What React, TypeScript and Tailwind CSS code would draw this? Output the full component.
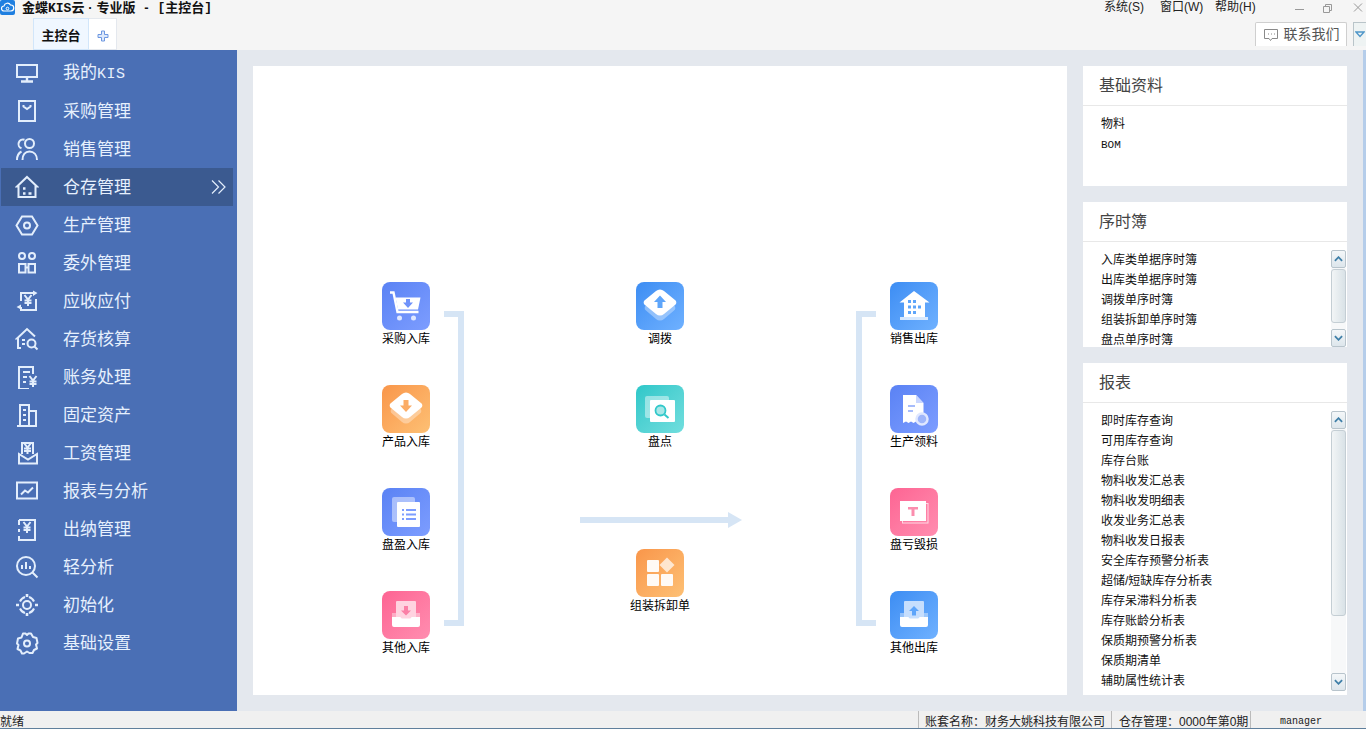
import React from 'react';

const cjk = "font-['Liberation_Sans','Noto_Sans_CJK_SC',sans-serif]";

const yen = (x: number, y: number) => (
  <path d={`M${x - 3.5} ${y - 5}l3.5 4.5 3.500-4.500M${x} ${y - 0.5}V${y + 6}M${x - 3.5} ${y + 0.5}h7M${x - 3.5} ${y + 3}h7`} />
);

const sideIcons: Record<string, React.ReactNode> = {
  monitor: <><rect x="2" y="4" width="20" height="12" /><path d="M12 16v4M6 20.500h12" strokeWidth="2.400" /></>,
  bag: <><rect x="4" y="2" width="16" height="20" /><path d="M8.500 6v1.500L12 10l3.500-2.500V6" /></>,
  people: <><circle cx="14.500" cy="6.500" r="4.500" /><path d="M9.500 2.800a4.500 4.500 0 0 0-3 8.500M2 23c0-4 1.500-7 4.500-8.500M7.500 23c0-5 2.500-8.500 7-8.500s7.500 3.500 7.500 8.500" /></>,
  house: <><path d="M12 2l10 9.500h-1.500V22h-17V11.500H2z" /><path d="M8 13.500h2.500M8 18.500h2.500M13.500 18.500h3" strokeWidth="2.400" /></>,
  hex: <><path d="M7 3.500h10l5.500 9-5.500 9H7l-5.500-9z" /><circle cx="12" cy="12.500" r="3" /></>,
  nodes: <><circle cx="7" cy="5" r="3" /><circle cx="17" cy="5" r="3" /><rect x="4" y="13" width="6.500" height="8.500" /><rect x="13.500" y="13" width="6.500" height="8.500" /><path d="M10.500 16.500h3" /></>,
  yenFlow: <><path d="M6 12V4h12M21 10v11H6v-3" /><path d="M18 1.500l4.500 2.500-4.500 3zM6 15.500v5L1.500 18z" fill="#e3eefc" stroke="none" />{yen(13, 11)}</>,
  houseSearch: <><path d="M6 21H3V11.500H2L12 2l8 7.500" /><path d="M7 13h3M7 17h3" /><circle cx="16.500" cy="16.500" r="4" /><path d="M19.500 19.500l3 3" /></>,
  bill: <><path d="M18 9V2H4v22h10" /><path d="M8 7h7M8 12h4M8 17h3" />{yen(18, 16)}</>,
  building: <><path d="M5 23V2h9v21M14 8h7v15M2 23h20" /><path d="M8 7h3M8 12h3M8 17h3" /></>,
  envelope: <><path d="M7 13V2h11v11" />{yen(12.500, 7)}<path d="M4 13v9.500h18V13l-9 5.500z" /></>,
  chart: <><rect x="2" y="3.500" width="20" height="16" /><path d="M6 15.500l4-4 3 2 5-5" /></>,
  cash: <><path d="M4 3h16v20H4v-4M4 15v-3M4 8V3" />{yen(12, 10)}</>,
  analyse: <><circle cx="11" cy="11" r="9" /><path d="M7 10v4M11 7v7M15 11v3M17.500 17.500l5 5" /></>,
  target: <><circle cx="12" cy="12" r="4" /><path d="M5 8.500a8 8 0 0 1 5-4.500M14 4a8 8 0 0 1 5 4.500M19 15.500a8 8 0 0 1-5 4.500M10 20a8 8 0 0 1-5-4.500" /><path d="M12 1v3M12 20v3M1 12h3M20 12h3" strokeWidth="2.600" /></>,
  gear: <><path d="M8 2.500h2.500l1.500 1.500 1.500-1.500H16l2 3.500 3.500 1 1 5-1.500 1.500 1 4-3 1.500-1.500 3h-3l-2.500-1.500L9 22.500H7l-1.500-3-3-1.500 1-4L2 12.500l1-5 3.500-1z" strokeLinejoin="round" /><circle cx="12" cy="12.500" r="3" /></>,
};

const menu: { label: React.ReactNode; icon: string; active?: boolean }[] = [
  { label: <>我的<span className="font-['Liberation_Mono',monospace] text-[15px] tracking-[0.5px]">KIS</span></>, icon: 'monitor' },
  { label: '采购管理', icon: 'bag' },
  { label: '销售管理', icon: 'people' },
  { label: '仓存管理', icon: 'house', active: true },
  { label: '生产管理', icon: 'hex' },
  { label: '委外管理', icon: 'nodes' },
  { label: '应收应付', icon: 'yenFlow' },
  { label: '存货核算', icon: 'houseSearch' },
  { label: '账务处理', icon: 'bill' },
  { label: '固定资产', icon: 'building' },
  { label: '工资管理', icon: 'envelope' },
  { label: '报表与分析', icon: 'chart' },
  { label: '出纳管理', icon: 'cash' },
  { label: '轻分析', icon: 'analyse' },
  { label: '初始化', icon: 'target' },
  { label: '基础设置', icon: 'gear' },
];

const SideItem = ({ label, icon, active }: { label: React.ReactNode; icon: string; active?: boolean }) => (
  <div className={`flex items-center h-[38px] ml-px mr-[4px] pl-[14px] text-[17px] text-[#e6f0fd] ${active ? 'bg-[#3b5a90]' : ''}`}>
    <svg viewBox="0 0 24 24" className="w-6 h-6 shrink-0" fill="none" stroke="#e3eefc" strokeWidth="2">
      {sideIcons[icon]}
    </svg>
    <span className="ml-[24px] pt-px flex-1">{label}</span>
    {active && (
      <svg viewBox="0 0 16 16" className="w-4 h-4 mr-[6px]" fill="none" stroke="#e3eefc" strokeWidth="1.200">
        <path d="M1 1.500L7.500 8 1 14.500M7.500 1.500L14 8l-6.500 6.500" />
      </svg>
    )}
  </div>
);

// flow icons, drawn on a 48 box
const Diamond = ({ arrow, up }: { arrow: string; up?: boolean }) => (
  <>
    <path d="M20 15.500a6 6 0 0 1 8 0l10 8a3 3 0 0 1 0 5l-10 8.500a6 6 0 0 1-8 0l-10-8.500a3 3 0 0 1 0-5z" fill="#fff" fillOpacity=".35" />
    <path d="M20 9a6 6 0 0 1 8 0l11 9a3 3 0 0 1 0 5l-11 9a6 6 0 0 1-8 0L9 23a3 3 0 0 1 0-5z" fill="#fff" />
    {up
      ? <path d="M24 13.500l6 6.500h-3.500v6h-5v-6H18z" fill={arrow} />
      : <path d="M24 27l6-6.500h-3.500V15h-5v5.500H18z" fill={arrow} />}
  </>
);

const Tray = ({ tint, arrow, up }: { tint: string; arrow: string; up?: boolean }) => (
  <>
    <rect x="10" y="22" width="28" height="8" fill="#fff" fillOpacity=".4" />
    <rect x="14" y="10" width="20" height="19" rx="1" fill={tint} />
    <path d="M10 26h8.500a2 2 0 0 0 1.500 1.500h8a2 2 0 0 0 1.500-1.500H38v8a2 2 0 0 1-2 2H12a2 2 0 0 1-2-2z" fill="#fff" />
    {up
      ? <path d="M24 15l5 5h-3v4.500h-4V20h-3z" fill={arrow} />
      : <path d="M24 24.500l5-5h-3V15h-4v4.500h-3z" fill={arrow} />}
  </>
);

const tiles: Record<string, { bg: string; art: React.ReactNode }> = {
  cart: {
    bg: 'from-[#5a82f4] to-[#7d9dff]',
    art: (
      <>
        <path d="M8 10.500h3.500l4 19.500h21" fill="none" stroke="#fff" strokeWidth="2.400" />
        <path d="M13.500 15.500H38.500l-2.500 12H16z" fill="#fff" />
        <circle cx="17.500" cy="36" r="2.500" fill="#dfe7ff" />
        <circle cx="31.500" cy="36" r="2.500" fill="#dfe7ff" />
        <path d="M26 26l5-5.500h-3V17h-4v3.500h-3z" fill="#6f92fa" />
      </>
    ),
  },
  product: { bg: 'from-[#f9964a] to-[#fdc074]', art: <Diamond arrow="#fbac66" /> },
  list: {
    bg: 'from-[#5a82f4] to-[#7d9dff]',
    art: (
      <>
        <rect x="10" y="9" width="23" height="25" rx="2" fill="#fff" fillOpacity=".45" />
        <rect x="15" y="14" width="23" height="25" rx="1" fill="#fff" />
        <path d="M20 22h2M24 22h10M20 26.500h2M24 26.500h10M20 31h2M24 31h10" stroke="#7d9dff" strokeWidth="2" />
      </>
    ),
  },
  inOther: { bg: 'from-[#fd6493] to-[#ff8db0]', art: <Tray tint="#ffd3e0" arrow="#fb7fa6" /> },
  move: { bg: 'from-[#3c8df3] to-[#6fb1ff]', art: <Diamond arrow="#5ea5fa" up /> },
  check: {
    bg: 'from-[#2bc7c9] to-[#70dede]',
    art: (
      <>
        <rect x="9" y="11" width="24" height="22" rx="2" fill="#fff" fillOpacity=".45" />
        <rect x="14" y="15" width="25" height="22" rx="1" fill="#fff" />
        <circle cx="24.500" cy="25.500" r="5" fill="#a9e7e7" stroke="#31c8ca" strokeWidth="1.800" />
        <path d="M28.500 29.500l4 3.500" stroke="#31c8ca" strokeWidth="2" />
      </>
    ),
  },
  blocks: {
    bg: 'from-[#f9964a] to-[#fdc074]',
    art: (
      <>
        <rect x="11" y="11" width="12" height="12" rx="1" fill="#fffaf5" />
        <rect x="11" y="25" width="12" height="12" rx="1" fill="#fffaf5" />
        <rect x="25" y="25" width="12" height="12" rx="1" fill="#fffaf5" />
        <path d="M31 8.500l7.500 7.500-7.500 7.500-7.500-7.500z" fill="#fff" fillOpacity=".7" />
      </>
    ),
  },
  store: {
    bg: 'from-[#3c8df3] to-[#6fb1ff]',
    art: (
      <>
        <path d="M24 9l15.500 11.500H35V35H14V20.500H9.500z" fill="#fff" />
        <path d="M10 35h28v3H10z" fill="#fff" fillOpacity=".75" />
        <path d="M18 18h3v3h-3zM23 18h3v3h-3zM18 23.500h3v3h-3zM23 23.500h3v3h-3zM28 23.500h3v3h-3zM18 29h3v3h-3zM23 29h3v3h-3z" fill="#5ea5fa" />
      </>
    ),
  },
  material: {
    bg: 'from-[#5a82f4] to-[#7d9dff]',
    art: (
      <>
        <path d="M13 10h13l7.500 8v20l-2.500-1.500-2.500 1.500-2.500-1.500-2.500 1.500-2.500-1.500-2.500 1.500-2.500-1.500L13 38z" fill="#fff" />
        <path d="M26 10l7.500 8H26z" fill="#c9d6ff" />
        <path d="M18 21h7M18 26h5" stroke="#a7bcfb" strokeWidth="2" />
        <circle cx="32" cy="34" r="5.500" fill="#9fb6fa" stroke="#dfe7ff" strokeWidth="2.500" />
      </>
    ),
  },
  loss: {
    bg: 'from-[#fd6493] to-[#ff8db0]',
    art: (
      <>
        <rect x="12.500" y="15.500" width="25.500" height="19.500" fill="none" stroke="#fff" strokeOpacity=".7" />
        <rect x="10" y="13" width="26" height="20" fill="#fff" />
        <path d="M18 19h10v2.500h-3.500V28h-3v-6.500H18z" fill="#fb8dae" />
      </>
    ),
  },
  outOther: { bg: 'from-[#3c8df3] to-[#6fb1ff]', art: <Tray tint="#c6defd" arrow="#5ea5fa" up /> },
};

const Node = ({ tile, label, className = '' }: { tile: string; label: string; className?: string }) => (
  <div className={`flex flex-col items-center ${className}`}>
    <div className={`w-12 h-12 rounded-[8px] bg-linear-to-br ${tiles[tile].bg}`}>
      <svg viewBox="0 0 48 48" className="w-12 h-12">{tiles[tile].art}</svg>
    </div>
    <span className="mt-px text-[12px] leading-[16px] text-black whitespace-nowrap">{label}</span>
  </div>
);

const Scrollbar = ({ thumb }: { thumb: string }) => (
  <div className="flex flex-col w-[15px] h-full">
    <div className="h-[18px] border border-[#b8c4cc] rounded-[2px] bg-linear-to-b from-[#f4f7f9] to-[#dde6ec] flex items-center justify-center">
      <svg viewBox="0 0 10 6" className="w-[9px] h-[6px]" fill="none" stroke="#3f7fa8" strokeWidth="2"><path d="M1 5l4-4 4 4" /></svg>
    </div>
    <div className="flex-1 pt-px bg-[#f7f8f9]">
      <div className={`${thumb} border border-[#c4ced4] rounded-[3px] bg-linear-to-r from-[#f2f5f6] to-[#d9e2e7]`} />
    </div>
    <div className="h-[18px] border border-[#b8c4cc] rounded-[2px] bg-linear-to-b from-[#f4f7f9] to-[#dde6ec] flex items-center justify-center">
      <svg viewBox="0 0 10 6" className="w-[9px] h-[6px]" fill="none" stroke="#3f7fa8" strokeWidth="2"><path d="M1 1l4 4 4-4" /></svg>
    </div>
  </div>
);

const Panel = ({ title, items, height, thumb, scrollPad = '' }: { title: string; items: React.ReactNode[]; height: string; thumb?: string; scrollPad?: string }) => (
  <div className={`${height} bg-white flex flex-col shrink-0`}>
    <div className="h-[40px] shrink-0 border-b border-[#e8e8e8] pl-4 pt-px flex items-center text-[16px] text-[#444]">{title}</div>
    <div className="flex-1 min-h-0 flex overflow-hidden">
      <div className="flex-1 pl-[18px] pt-[8px] text-[12px] leading-[20px] text-[#111]">
        {items.map((t, i) => <div key={i} className="h-5 whitespace-nowrap">{t}</div>)}
      </div>
      {thumb && <div className={`${scrollPad} shrink-0 pr-px`}><Scrollbar thumb={thumb} /></div>}
    </div>
  </div>
);

const Bracket = ({ className }: { className: string }) => (
  <div className={`absolute top-[245px] w-5 h-[315px] border-y-[6px] border-[#d6e5f5] ${className}`} />
);

export default function App() {
  return (
    <div className={`w-[1366px] h-[730px] flex flex-col overflow-hidden bg-[#f5f5f5] ${cjk}`}>
      {/* title bar */}
      <div className="h-[18px] flex items-start text-[12px] leading-[15px] text-[#111]">
        <svg viewBox="0 0 15 15" className="w-[15px] h-[15px]">
          <rect width="15" height="15" rx="2" fill="#1f7fe0" />
          <path d="M4 11a2.500 2.500 0 0 1 0-5 3.500 3.500 0 0 1 6.500-1A3 3 0 0 1 11 11z" fill="none" stroke="#fff" strokeWidth="1.200" />
          <circle cx="7.500" cy="8.500" r="1.300" fill="none" stroke="#fff" />
        </svg>
        <div className="ml-[7px] flex text-[13px] font-semibold whitespace-nowrap">
          <span>金蝶<span className="font-['Liberation_Mono',monospace]">KIS</span>云</span>
          <span className="w-3 text-center">·</span>
          <span>专业版</span>
          <span className="w-[22px] text-center">-</span>
          <span className="font-['Liberation_Mono',monospace]">[</span>
          <span>主控台</span>
          <span className="font-['Liberation_Mono',monospace]">]</span>
        </div>
        <div className="ml-auto flex items-center text-[#222]">
          <span className="w-[56px]">系统(S)</span>
          <span className="w-[55px]">窗口(W)</span>
          <span className="w-[79px]">帮助(H)</span>
          <svg viewBox="0 0 72 12" className="w-[72px] h-3" fill="none" stroke="#999">
            <path d="M1 7.500h9" />
            <path d="M29.500 4.500h6v6h-6zM31.500 4.500v-2h6v6h-2" />
            <path d="M60 1.500l8 8M68 1.500l-8 8" />
          </svg>
        </div>
      </div>

      {/* tab row */}
      <div className="h-[32px] flex items-start pl-[33px]">
        <div className="w-[56px] h-[32px] pt-[4px] flex items-center justify-center bg-[#f0f7ff] border border-[#d2e6fa] text-[13px] font-semibold text-[#111]">主控台</div>
        <div className="w-[28px] h-[32px] pt-[3px] flex items-center justify-center bg-white border border-l-0 border-[#e4e8ee]">
          <svg viewBox="0 0 12 12" className="w-3 h-3" fill="#dce8fb" stroke="#6d97e0"><path d="M4.500 1h3v3.500H11v3H7.500V11h-3V7.500H1v-3h3.500z" /></svg>
        </div>
        <div className="ml-auto mt-1 flex items-start">
          <div className="w-[92px] h-[24px] flex items-center justify-center gap-[5px] bg-white border border-b-0 border-[#cfcfcf] rounded-t-[2px] text-[14px] text-[#555]">
            <svg viewBox="0 0 16 14" className="w-4 h-[14px]" fill="none" stroke="#8a8a8a"><path d="M1.500 1.500h13v9H9l-1.500 2-1.500-2H1.500z" /><path d="M5 6h1M8 6h1M11 6h1" /></svg>
            联系我们
          </div>
          <div className="ml-[6px] w-[13px] h-[24px] bg-[#eef3f3] border-l border-t border-[#b9c4c9] flex items-center justify-center">
            <svg viewBox="0 0 10 7" className="w-[10px] h-[7px]" fill="none" stroke="#4f96c9" strokeWidth="1.400"><path d="M1 1l4 4.500L9 1z" /></svg>
          </div>
        </div>
      </div>

      {/* body */}
      <div className="h-[661px] flex bg-[#e4e8ee]">
        <aside className="w-[237px] shrink-0 bg-[#4a6fb5] pt-1">
          {menu.map(m => <SideItem key={m.icon} {...m} />)}
        </aside>

        <main className="flex-1 flex gap-4 p-4">
          {/* flow diagram */}
          <div className="relative w-[814px] bg-white flex pt-[216px] pl-[103px] gap-[154px]">
            <div className="w-[100px] flex flex-col gap-[38px]">
              <Node tile="cart" label="采购入库" />
              <Node tile="product" label="产品入库" />
              <Node tile="list" label="盘盈入库" />
              <Node tile="inOther" label="其他入库" />
            </div>
            <div className="w-[100px] flex flex-col">
              <Node tile="move" label="调拨" className="mb-[38px]" />
              <Node tile="check" label="盘点" className="mb-[99px]" />
              <Node tile="blocks" label="组装拆卸单" />
            </div>
            <div className="w-[100px] flex flex-col gap-[38px]">
              <Node tile="store" label="销售出库" />
              <Node tile="material" label="生产领料" />
              <Node tile="loss" label="盘亏毁损" />
              <Node tile="outOther" label="其他出库" />
            </div>
            <Bracket className="left-[191px] border-r-[6px]" />
            <Bracket className="left-[603px] border-l-[6px]" />
            <svg viewBox="0 0 162 16" className="absolute left-[327px] top-[446px] w-[162px] h-4" fill="#d6e5f5">
              <path d="M0 5h148V0l14 8-14 8v-5H0z" />
            </svg>
          </div>

          {/* right column */}
          <div className="w-[264px] flex flex-col gap-4">
            <Panel title="基础资料" height="h-[120px]" items={['物料', <span className="font-['Liberation_Mono',monospace] text-[11px]">BOM</span>]} />
            <Panel
              title="序时簿"
              height="h-[145px]"
              thumb="h-[54px]"
              scrollPad="pt-[8px]"
              items={['入库类单据序时簿', '出库类单据序时簿', '调拨单序时簿', '组装拆卸单序时簿', '盘点单序时簿']}
            />
            <Panel
              title="报表"
              height="h-[332px]"
              thumb="h-[186px]"
              scrollPad="pt-[8px] pb-[4px]"
              items={[
                '即时库存查询', '可用库存查询', '库存台账', '物料收发汇总表', '物料收发明细表', '收发业务汇总表', '物料收发日报表',
                '安全库存预警分析表', '超储/短缺库存分析表', '库存呆滞料分析表', '库存账龄分析表', '保质期预警分析表', '保质期清单', '辅助属性统计表',
              ]}
            />
          </div>
        </main>
        <div className="w-[3px] shrink-0 bg-[#b5cdea]" />
      </div>

      {/* status bar */}
      <div className="h-[19px] flex flex-col bg-[#f0f0f0]">
        <div className="h-[17px] flex text-[12px] leading-[16px] text-[#222] overflow-hidden">
          <span className="w-[918px] pt-[3px]">就绪</span>
          <span className="w-[193px] pt-[3px] pl-[6px] border-l border-[#bbb] whitespace-nowrap">账套名称：财务大姚科技有限公司</span>
          <span className="w-[139px] pt-[3px] pl-[7px] border-l border-[#bbb] whitespace-nowrap">仓存管理：0000年第0期</span>
          <span className="pt-[3px] pl-[29px] border-l border-[#bbb] font-['Liberation_Mono',monospace] text-[10px]">manager</span>
        </div>
        <div className="h-px bg-[#5f7f9c]" />
        <div className="h-px bg-white" />
      </div>
    </div>
  );
}
